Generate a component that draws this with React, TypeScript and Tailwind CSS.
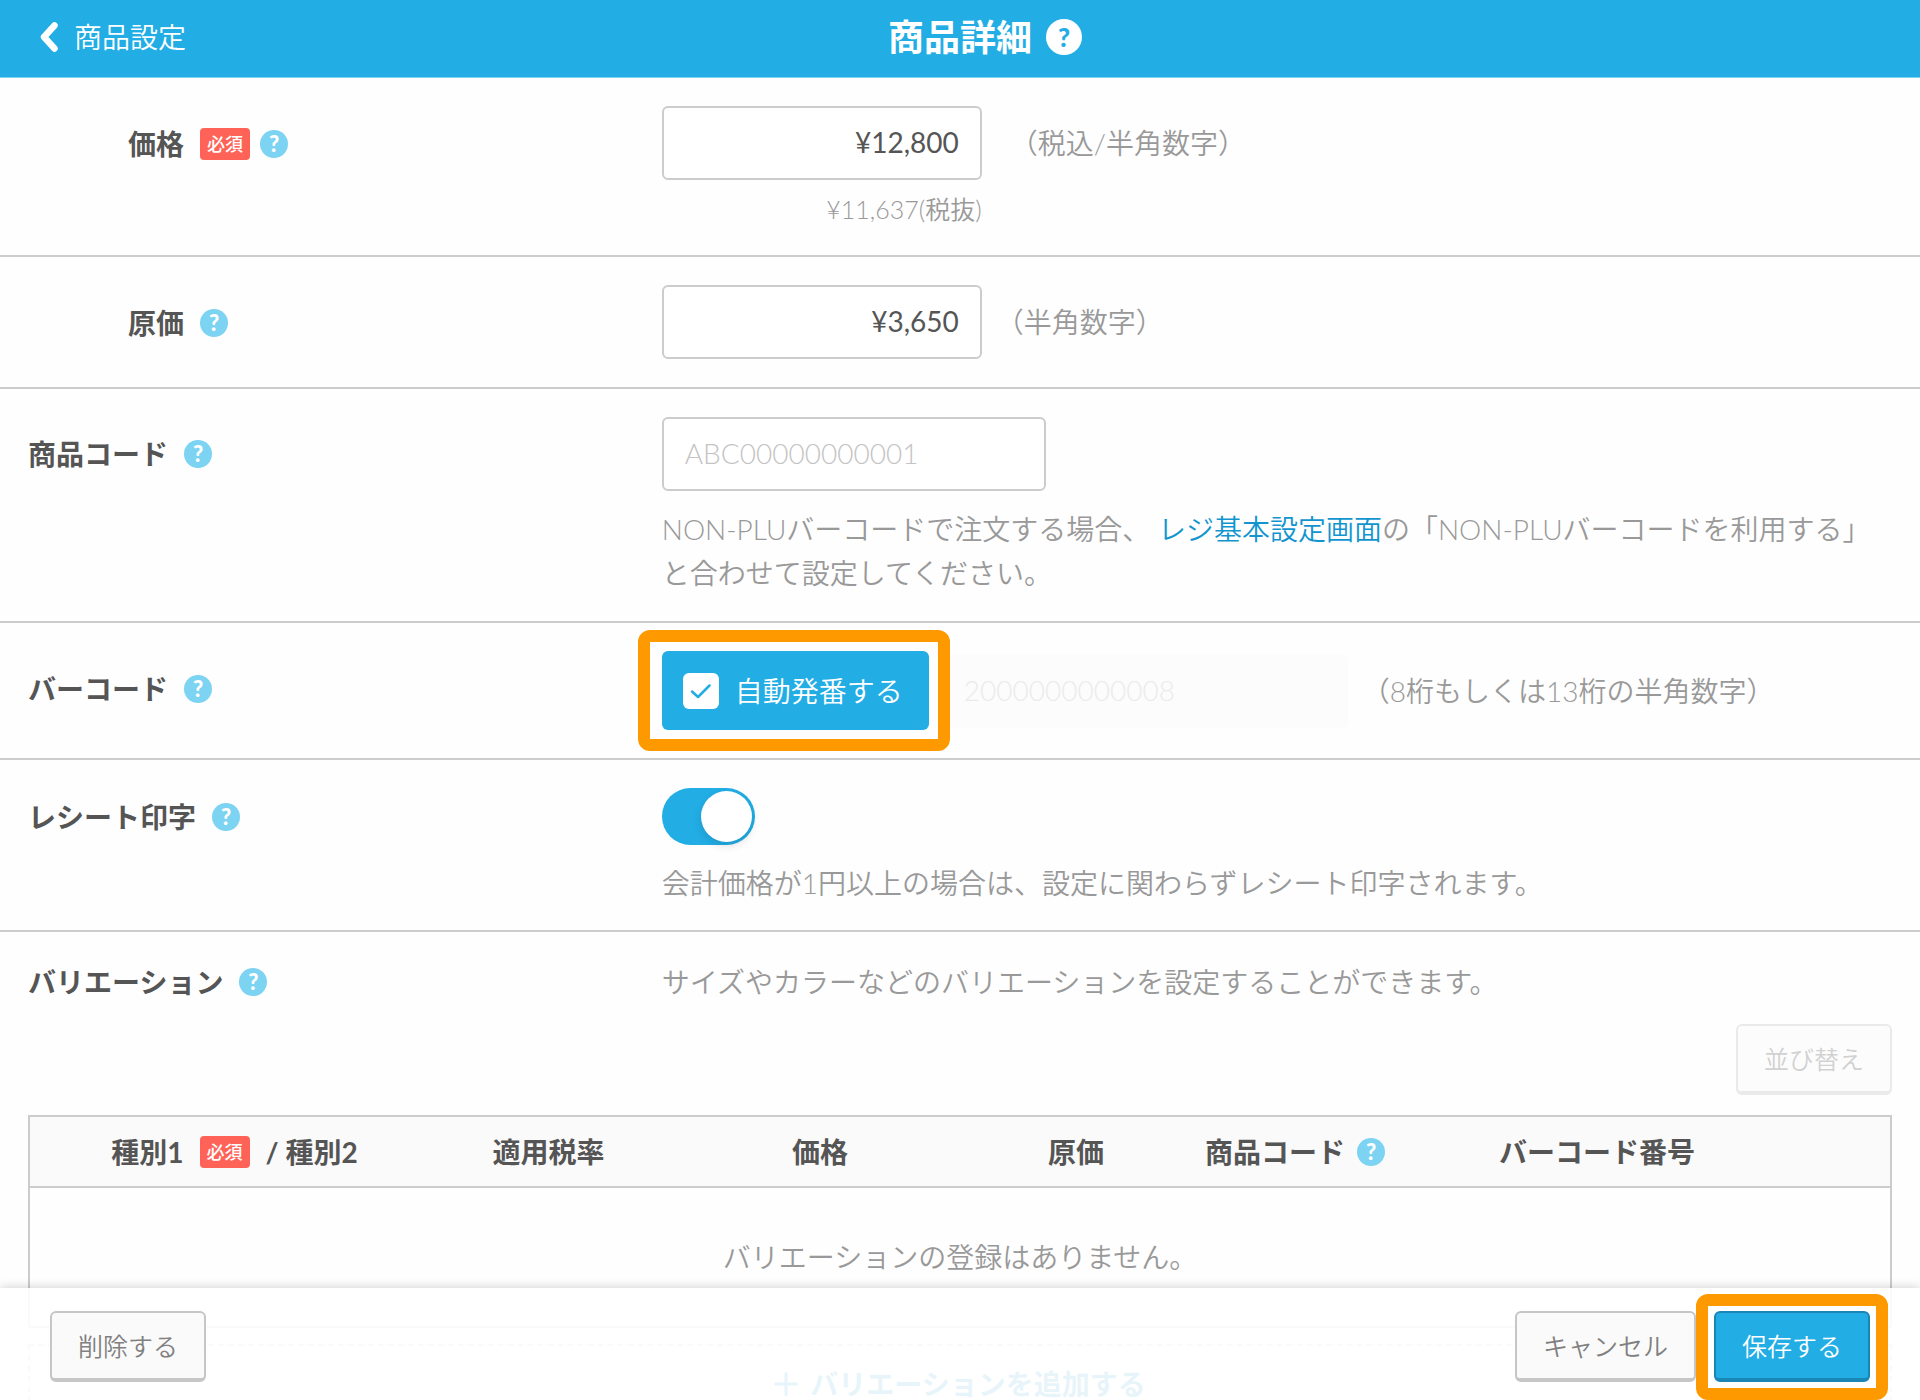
import type { ReactNode } from "react";

function Help({ topic }: { topic: string }) {
  return (
    <button
      type="button"
      aria-label={`${topic}のヘルプ`}
      className="flex size-7 shrink-0 items-center justify-center rounded-full bg-[#7dd3f2] text-[22px] leading-none font-black text-white"
    >
      ?
    </button>
  );
}

function Required() {
  return (
    <span className="flex h-8 w-[50px] shrink-0 items-center justify-center rounded bg-[#ff6358] text-[18px] leading-none font-medium text-white">
      必須
    </span>
  );
}

type RowProps = {
  label: string;
  htmlFor?: string;
  nested?: boolean;
  required?: boolean;
  labelHeight: string;
  className?: string;
  children: ReactNode;
};

function Row({ label, htmlFor, nested, required, labelHeight, className = "pb-7", children }: RowProps) {
  return (
    <section className={`border-b-2 border-[#cccccc] px-7 pt-7 ${className}`}>
      <div className="grid grid-cols-[34%_1fr]">
        <div className={`flex items-center gap-4 ${labelHeight} ${nested ? "pl-[100px]" : ""}`}>
          <label htmlFor={htmlFor} className="font-bold text-[#555555]">
            {label}
          </label>
          {required ? (
            <div className="flex items-center gap-2.5">
              <Required />
              <Help topic={label} />
            </div>
          ) : (
            <Help topic={label} />
          )}
        </div>
        <div>{children}</div>
      </div>
    </section>
  );
}

const fieldClass =
  "h-[74px] rounded-md border-2 border-[#cccccc] bg-white px-[21px] pb-0.5 font-normal text-[#555555] placeholder:font-light placeholder:text-[#c4c4c4] placeholder:opacity-100 outline-none";

const plainButton =
  "h-[71px] rounded-md border-2 border-b-4 border-[#c6c6c6] bg-[#fafafa] px-[26px] text-[25px] text-[#808080]";

export default function App() {
  return (
    <div className="relative flex h-screen flex-col overflow-hidden bg-[#fefefe] font-['Lato','Noto_Sans_CJK_JP',sans-serif] text-[28px] leading-[44px] font-[350] text-[#999999]">
      <header className="grid h-[78px] shrink-0 grid-cols-[1fr_auto_1fr] items-center border-b border-[#7dd3f2] bg-[#22ade5] pb-1 text-white">
        <a href="#settings" className="flex items-center gap-4 pl-10">
          <svg viewBox="0 0 18 30" className="h-[30px] w-[18px]" fill="none" aria-hidden="true">
            <path d="M14.5 3.5 L4 15 L14.5 26.5" stroke="currentColor" strokeWidth="6.5" strokeLinecap="round" strokeLinejoin="round" />
          </svg>
          商品設定
        </a>
        <h1 className="text-[36px] font-bold">商品詳細</h1>
        <button
          type="button"
          aria-label="商品詳細のヘルプ"
          className="ml-3.5 flex size-9 items-center justify-center rounded-full bg-white text-[26px] leading-none font-black text-[#22ade5]"
        >
          ?
        </button>
      </header>

      <main className="min-h-0 flex-1 overflow-y-auto [scrollbar-width:none]">
        <Row label="価格" htmlFor="price" nested required labelHeight="h-[76px]">
          <div className="flex items-center gap-7">
            <input id="price" defaultValue="¥12,800" className={`${fieldClass} w-80 text-right`} />
            <span>（税込/半角数字）</span>
          </div>
          <p className="mt-[11px] w-80 text-right text-[25px] leading-9">¥11,637(税抜)</p>
        </Row>

        <Row label="原価" htmlFor="cost" nested labelHeight="h-[76px]" className="pb-[26px]">
          <div className="flex items-center gap-3.5">
            <input id="cost" defaultValue="¥3,650" className={`${fieldClass} w-80 text-right`} />
            <span>（半角数字）</span>
          </div>
        </Row>

        <Row label="商品コード" htmlFor="code" labelHeight="h-[74px]" className="pb-[26px]">
          <input id="code" placeholder="ABC00000000001" className={`${fieldClass} block w-96`} />
          <p className="mt-4">
            NON-PLUバーコードで注文する場合、{" "}
            <a href="#register" className="text-[#1295cf]">
              レジ基本設定画面
            </a>
            の「NON-PLUバーコードを利用する」と合わせて設定してください。
          </p>
        </Row>

        <Row label="バーコード" htmlFor="barcode" labelHeight="h-[76px]">
          <div className="flex items-center gap-3.5">
            <div className="relative">
              <label className="flex h-[79px] items-center gap-4 rounded-md bg-[#22ade5] pr-[26px] pl-[21px] text-white">
                <span className="relative flex">
                  <input type="checkbox" defaultChecked className="size-9 appearance-none rounded-md bg-white" />
                  <svg viewBox="0 0 36 36" className="pointer-events-none absolute inset-0 size-9" fill="none" aria-hidden="true">
                    <path d="M9 18.5 L15 24 L26.5 12.5" stroke="#22ade5" strokeWidth="2.5" strokeLinecap="round" strokeLinejoin="round" />
                  </svg>
                </span>
                自動発番する
              </label>
              <div className="pointer-events-none absolute -top-[21px] -right-[21px] -bottom-[21px] -left-6 z-10 rounded-xl border-12 border-[#ff9900]" />
            </div>
            <input
              id="barcode"
              disabled
              defaultValue="2000000000008"
              className="h-[74px] w-[405px] rounded-md bg-[#fcfcfc] px-[21px] pb-0.5 text-[#ebebeb]"
            />
            <span>（8桁もしくは13桁の半角数字）</span>
          </div>
        </Row>

        <Row label="レシート印字" htmlFor="receipt" labelHeight="h-[57px]" className="pb-[25px]">
          <input
            id="receipt"
            type="checkbox"
            role="switch"
            defaultChecked
            className="flex h-[57px] w-[93px] appearance-none items-center justify-end rounded-full bg-[#22ade5] pr-[3px] before:size-[51px] before:rounded-full before:bg-white before:shadow-[0_4px_8px_rgba(0,0,0,0.12)]"
          />
          <p className="mt-4">会計価格が1円以上の場合は、設定に関わらずレシート印字されます。</p>
        </Row>

        <section className="px-7 pt-7 pb-32">
          <div className="grid grid-cols-[34%_1fr]">
            <div className="flex items-center gap-4">
              <h2 className="font-bold text-[#555555]">バリエーション</h2>
              <Help topic="バリエーション" />
            </div>
            <p>サイズやカラーなどのバリエーションを設定することができます。</p>
          </div>
          <div className="my-5 flex justify-end">
            <button type="button" disabled className={`${plainButton} opacity-35`}>
              並び替え
            </button>
          </div>

          <table className="w-full table-fixed border-collapse border-2 border-[#cccccc]">
            <colgroup>
              <col className="w-[410px]" />
              <col className="w-[219px]" />
              <col className="w-[324px]" />
              <col className="w-[188px]" />
              <col className="w-[250px]" />
              <col className="w-[354px]" />
              <col />
            </colgroup>
            <thead>
              <tr className="h-[71px] border-b-2 border-[#cccccc] bg-[#fafafa] text-[#555555]">
                <th>
                  <div className="flex items-center justify-center gap-4">
                    種別1
                    <Required />
                    / 種別2
                  </div>
                </th>
                <th>適用税率</th>
                <th>価格</th>
                <th>原価</th>
                <th>
                  <div className="flex items-center justify-center gap-3">
                    商品コード
                    <Help topic="商品コード" />
                  </div>
                </th>
                <th>バーコード番号</th>
                <th />
              </tr>
            </thead>
            <tbody>
              <tr className="h-[140px]">
                <td colSpan={7} className="text-center">
                  バリエーションの登録はありません。
                </td>
              </tr>
            </tbody>
          </table>

          <button
            type="button"
            className="mt-4 flex h-20 w-full items-center justify-center gap-3 border-2 border-dashed border-[#cccccc] leading-7 font-bold text-[#1295cf]"
          >
            <svg viewBox="0 0 24 24" className="size-6" fill="none" aria-hidden="true">
              <path d="M12 1.5 V22.5 M1.5 12 H22.5" stroke="currentColor" strokeWidth="3" strokeLinecap="round" />
            </svg>
            バリエーションを追加する
          </button>
        </section>
      </main>

      <footer className="absolute inset-x-0 bottom-0 flex h-28 items-start justify-between bg-white/90 px-[50px] pt-[23px] shadow-[0_0_10px_rgba(0,0,0,0.2)]">
        <button type="button" className={plainButton}>
          削除する
        </button>
        <div className="flex gap-[18px]">
          <button type="button" className={plainButton}>
            キャンセル
          </button>
          <div className="relative">
            <div className="pointer-events-none absolute -inset-x-[18px] -top-[17px] -bottom-[18px] rounded-xl border-12 border-[#ff9900] bg-white" />
            <button
              type="button"
              className="relative h-[71px] rounded-md border-2 border-b-4 border-[#1a86b5] bg-[#22ade5] px-[26px] text-[25px] text-white"
            >
              保存する
            </button>
          </div>
        </div>
      </footer>
    </div>
  );
}
